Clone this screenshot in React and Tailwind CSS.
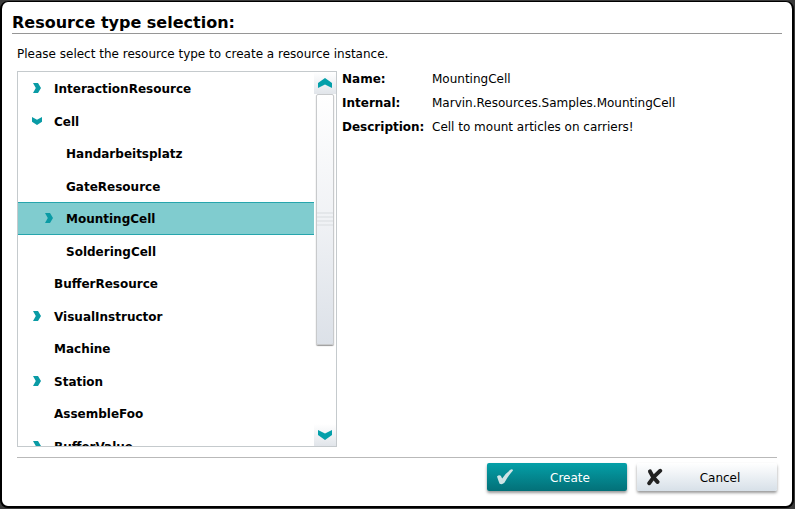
import { useState } from 'react';

const ITEMS = [
  { name: 'InteractionResource', level: 0, arrow: 'right' },
  { name: 'Cell', level: 0, arrow: 'down' },
  { name: 'Handarbeitsplatz', level: 1 },
  { name: 'GateResource', level: 1 },
  { name: 'MountingCell', level: 1, arrow: 'right' },
  { name: 'SolderingCell', level: 1 },
  { name: 'BufferResource', level: 0 },
  { name: 'VisualInstructor', level: 0, arrow: 'right' },
  { name: 'Machine', level: 0 },
  { name: 'Station', level: 0, arrow: 'right' },
  { name: 'AssembleFoo', level: 0 },
  { name: 'BufferValue', level: 0, arrow: 'right' },
];

const DETAILS = [
  ['Name:', 'MountingCell'],
  ['Internal:', 'Marvin.Resources.Samples.MountingCell'],
  ['Description:', 'Cell to mount articles on carriers!'],
];

function Arrow({ direction }) {
  if (direction === 'down') {
    return (
      <svg className="h-3 w-3" viewBox="0 0 12 12" fill="#0a9ba5" aria-hidden="true">
        <path d="M1 2 6 4.8 11 2V6.8L6 10 1 6.8Z" />
      </svg>
    );
  }
  return (
    <svg className="h-3 w-3" viewBox="0 0 12 12" fill="#0a9ba5" aria-hidden="true">
      <path d="M2 1H7L10 6 7 11H2L4.8 6Z" />
    </svg>
  );
}

function ScrollBar() {
  return (
    <div className="flex w-[22px] shrink-0 flex-col">
      <button
        type="button"
        aria-label="Scroll up"
        className="flex h-[22px] items-center justify-center bg-linear-to-b from-white to-[#e1e5ea]"
      >
        <svg className="h-3 w-4" viewBox="0 0 16 12" fill="#04a0aa" aria-hidden="true">
          <path d="M1 6 8 1 15 6V11L8 7.4 1 11Z" />
        </svg>
      </button>
      <div className="min-h-0 flex-1 px-[2px]">
        <div className="flex h-[76%] flex-col items-center justify-center gap-[2px] rounded-xs border border-[#c8cacc] bg-linear-to-b from-white via-[#f0f2f5] to-[#dce1e8] shadow-[0_1px_1px_#999]">
          <span className="h-[2px] w-4 bg-[#e4e7ea]" />
          <span className="h-[2px] w-4 bg-[#e4e7ea]" />
          <span className="h-[2px] w-4 bg-[#e4e7ea]" />
          <span className="h-[2px] w-4 bg-[#e4e7ea]" />
        </div>
      </div>
      <button
        type="button"
        aria-label="Scroll down"
        className="flex h-[22px] items-center justify-center bg-linear-to-b from-white to-[#e1e5ea]"
      >
        <svg className="h-3 w-4" viewBox="0 0 16 12" fill="#04a0aa" aria-hidden="true">
          <path d="M1 1 8 4.6 15 1V6L8 11 1 6Z" />
        </svg>
      </button>
    </div>
  );
}

function TreeRow({ item, selected, onSelect }) {
  return (
    <li role="treeitem" aria-selected={selected} className="flex">
      <button
        type="button"
        onClick={onSelect}
        className={`flex w-full items-center gap-[11px] border-y text-left font-bold ${
          item.level ? 'pl-[25px]' : 'pl-[13px]'
        } ${selected ? 'border-[#26a5ad] bg-[#80cccf]' : 'border-transparent'}`}
      >
        <span className="h-3 w-3 shrink-0">{item.arrow && <Arrow direction={item.arrow} />}</span>
        <span className="pt-0.5">{item.name}</span>
      </button>
    </li>
  );
}

export default function App() {
  const [selected, setSelected] = useState('MountingCell');
  return (
    <div className="flex h-screen bg-[#3a3a3a] py-px pr-px font-['DejaVu_Sans',sans-serif] text-[12px] leading-5 text-black">
      <main className="flex min-w-0 flex-1 flex-col rounded-lg border-x-2 border-t border-b-2 border-black bg-white">
        <h1 className="mx-[10px] h-8 border-b border-[#969696] pt-[9px] text-[16px] leading-6 font-bold">
          Resource type selection:
        </h1>
        <p className="mx-[15px] mt-[10px] mb-[7px]">
          Please select the resource type to create a resource instance.
        </p>
        <div className="mx-[15px] flex min-h-0 flex-1 gap-[5px]">
          <section className="flex w-[320px] shrink-0 border border-[#c5cacd]">
            <div className="min-w-0 flex-1 overflow-hidden">
              <ul role="tree" className="grid h-[390px] auto-rows-fr">
                {ITEMS.map((item) => (
                  <TreeRow
                    key={item.name}
                    item={item}
                    selected={item.name === selected}
                    onSelect={() => setSelected(item.name)}
                  />
                ))}
              </ul>
            </div>
            <ScrollBar />
          </section>
          <dl className="-mt-[2px] grid min-w-0 flex-1 auto-rows-min grid-cols-[90px_1fr] gap-y-1">
            {DETAILS.map(([label, value]) => (
              <div key={label} className="contents">
                <dt className="font-bold">{label}</dt>
                <dd>{value}</dd>
              </div>
            ))}
          </dl>
        </div>
        <footer className="mx-[15px] mt-[10px] flex justify-end gap-[10px] border-t border-[#b9b9b9] pt-[5px] pb-[15px]">
          <button
            type="button"
            className="flex h-7 w-[140px] items-center rounded-xs bg-linear-to-b from-[#04a0a8] to-[#037078] pl-[9px] text-white shadow-[0_2px_3px_#999]"
          >
            <svg className="h-[18px] w-[18px]" viewBox="0 0 18 18" fill="#cfe4e6" aria-hidden="true">
              <path d="M1 8.6Q2.8 6.6 4.8 7.8L6.2 10.4Q9.6 5 14.8 1.6 16.6 .8 17 2.4 12 8 8.4 14.8 6 17 3.6 15.8 2.2 12.4 1 8.6Z" />
            </svg>
            <span className="flex-1 pt-0.5 pr-[1px] text-center">Create</span>
          </button>
          <button
            type="button"
            className="flex h-7 w-[140px] items-center rounded-xs bg-linear-to-b from-white to-[#d7e0e8] pl-[9px] shadow-[0_2px_3px_#999]"
          >
            <svg
              className="h-[18px] w-[18px]"
              viewBox="0 0 18 18"
              fill="none"
              stroke="#222"
              strokeWidth="4"
              strokeLinecap="round"
              aria-hidden="true"
            >
              <path d="M4 3.4Q6.4 9.4 11.6 14" />
              <path d="M14.2 2.8Q7.4 8.4 3.2 15.2" />
            </svg>
            <span className="flex-1 pt-0.5 pr-[1px] text-center">Cancel</span>
          </button>
        </footer>
      </main>
    </div>
  );
}
